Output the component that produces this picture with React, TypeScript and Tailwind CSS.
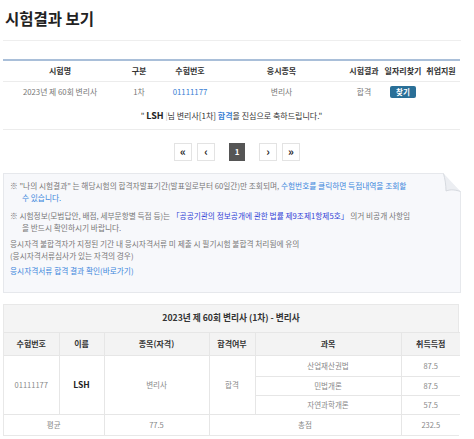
const font = "font-['Noto_Sans_CJK_KR','Noto_Sans',sans-serif]"

function PageBtn({ children, active }: { children: React.ReactNode; active?: boolean }) {
  return (
    <span
      className={
        active
          ? 'flex h-[18px] w-[16px] items-center justify-center bg-[#555] text-[8px] font-bold text-white'
          : 'flex h-[18px] w-[18px] items-center justify-center border border-[#e3e3e3] bg-white text-[11px] font-bold leading-none text-[#222]'
      }
    >
      {children}
    </span>
  )
}

function ResultList() {
  return (
    <table className="w-[457px] table-fixed border-collapse border-t-2 border-[#a9bfd9] text-center">
      <colgroup>
        <col className="w-[114px]" />
        <col className="w-[44px]" />
        <col className="w-[58px]" />
        <col className="w-[125px]" />
        <col className="w-[40px]" />
        <col className="w-[38px]" />
        <col className="w-[38px]" />
      </colgroup>
      <thead>
        <tr className="h-[21px] border-b border-[#ececec] text-[8px] font-bold text-[#333]">
          <th>시험명</th>
          <th>구분</th>
          <th>수험번호</th>
          <th>응시종목</th>
          <th className="whitespace-nowrap">시험결과</th>
          <th className="whitespace-nowrap">일자리찾기</th>
          <th className="whitespace-nowrap">취업지원</th>
        </tr>
      </thead>
      <tbody className="text-[7.8px] text-[#777]">
        <tr className="h-[22px]">
          <td>2023년 제 60회 변리사</td>
          <td>1차</td>
          <td className="text-[#3b7fd4]">01111177</td>
          <td>변리사</td>
          <td>합격</td>
          <td>
            <span className="inline-block rounded-[2px] bg-[#2a6f97] px-[6px] py-[1px] text-[7.5px] font-bold leading-[10px] text-white">
              찾기
            </span>
          </td>
          <td></td>
        </tr>
        <tr className="h-[26px] border-b border-[#ececec]">
          <td colSpan={7} className="text-[8px] text-[#333]">
            " <b className="text-[9px] text-[#222]">LSH</b>
            <span className="text-[#bbb]"> |</span>님 변리사[1차]{' '}
            <b className="text-[#3b7fd4]">합격</b>을 진심으로 축하드립니다."
          </td>
        </tr>
      </tbody>
    </table>
  )
}

function Notice() {
  return (
    <div className="relative mt-[12px] w-[458px] border border-[#e6e8ec] bg-[#f7f8fb] px-[6px] pb-[15px] pt-[6px] text-[7.7px] leading-[12px] text-[#777]">
      <p className="whitespace-nowrap">
        ※ "나의 시험결과" 는 해당시험의 합격자발표기간(발표일로부터 60일간)만 조회되며,{' '}
        <span className="text-[#3b86dc]">수험번호를 클릭하면 득점내역을 조회할</span>
        <br />
        <span className="pl-[12px] text-[#3b86dc]">수 있습니다.</span>
      </p>
      <p className="mt-[6px] whitespace-nowrap">
        ※ 시험정보(모범답안, 배점, 세부문항별 득점 등)는{' '}
        <span className="text-[#3343d6]">「공공기관의 정보공개에 관한 법률 제9조제1항제5호」</span> 의거
        비공개 사항임
        <br />
        <span className="pl-[12px]">을 반드시 확인하시기 바랍니다.</span>
      </p>
      <p className="mt-[4px] whitespace-nowrap">
        응시자격 불합격자가 지정된 기간 내 응시자격서류 미 제출 시 필기시험 불합격 처리됨에 유의
        <br />
        (응시자격서류심사가 있는 자격의 경우)
      </p>
      <p className="mt-[3px] text-[#3b86dc]">응시자격서류 합격 결과 확인(바로가기)</p>
      <svg
        className="absolute -right-px -top-px"
        width="18"
        height="19"
        viewBox="0 0 18 19"
      >
        <path d="M0 0 H18 V19 Z" fill="#ffffff" />
        <path d="M0.5 0.5 C2 6 3 12 3 18 C8 16 13 17 17.5 18.5" fill="#eceef2" stroke="#cfd3d9" strokeWidth="0.8" />
      </svg>
    </div>
  )
}

function ScoreTable() {
  const head = 'border-l border-[#e6e6e6] first:border-l-0'
  const cell = 'border-l border-b border-[#e6e6e6]'
  return (
    <div className="mt-[11px] w-[456px] border border-[#e8e8e8] bg-[#f4f4f4]">
      <div className="flex h-[27px] items-center justify-center text-[8.7px] font-bold text-[#333]">
        2023년 제 60회 변리사 (1차) - 변리사
      </div>
      <table className="w-full table-fixed border-collapse text-center">
        <colgroup>
          <col className="w-[55px]" />
          <col className="w-[45px]" />
          <col className="w-[105px]" />
          <col className="w-[46px]" />
          <col className="w-[146px]" />
          <col className="w-[59px]" />
        </colgroup>
        <thead>
          <tr className="h-[23px] border-y border-[#e6e6e6] bg-[#f3f3f3] text-[8px] font-bold text-[#333]">
            <th className={head}>수험번호</th>
            <th className={head}>이름</th>
            <th className={head}>종목(자격)</th>
            <th className={head}>합격여부</th>
            <th className={head}>과목</th>
            <th className={head}>취득득점</th>
          </tr>
        </thead>
        <tbody className="bg-white text-[7.5px] text-[#888]">
          <tr className="h-[21px]">
            <td rowSpan={3} className="border-b border-[#e6e6e6]">01111177</td>
            <td rowSpan={3} className={`${cell} text-[8.5px] font-bold text-[#222]`}>
              LSH
            </td>
            <td rowSpan={3} className={cell}>변리사</td>
            <td rowSpan={3} className={cell}>합격</td>
            <td className={cell}>산업재산권법</td>
            <td className={cell}>87.5</td>
          </tr>
          <tr className="h-[19px]">
            <td className={cell}>민법개론</td>
            <td className={cell}>87.5</td>
          </tr>
          <tr className="h-[19px]">
            <td className={cell}>자연과학개론</td>
            <td className={cell}>57.5</td>
          </tr>
          <tr className="h-[21px]">
            <td colSpan={2}>평균</td>
            <td className="border-l border-[#e6e6e6]">77.5</td>
            <td colSpan={2} className="border-l border-[#e6e6e6]">총점</td>
            <td className="border-l border-[#e6e6e6]">232.5</td>
          </tr>
        </tbody>
      </table>
    </div>
  )
}

export default function App() {
  return (
    <div className={`${font} h-[439px] w-[474px] overflow-hidden bg-white`}>
      <h1 className="px-[5px] pt-[7px] text-[15.5px] font-bold leading-[22px] text-[#222]">시험결과 보기</h1>
      <div className="mx-[3px] mt-[11px] h-px w-[458px] bg-[#eeeeee]" />
      <div className="px-[3px] pt-[18px]">
        <ResultList />
        <div className="mt-[13px] flex items-center justify-center">
          <div className="flex items-center gap-[5px]">
            <PageBtn>«</PageBtn>
            <PageBtn>‹</PageBtn>
          </div>
          <div className="mx-[14px]">
            <PageBtn active>1</PageBtn>
          </div>
          <div className="flex items-center gap-[5px]">
            <PageBtn>›</PageBtn>
            <PageBtn>»</PageBtn>
          </div>
        </div>
        <Notice />
        <ScoreTable />
      </div>
    </div>
  )
}
